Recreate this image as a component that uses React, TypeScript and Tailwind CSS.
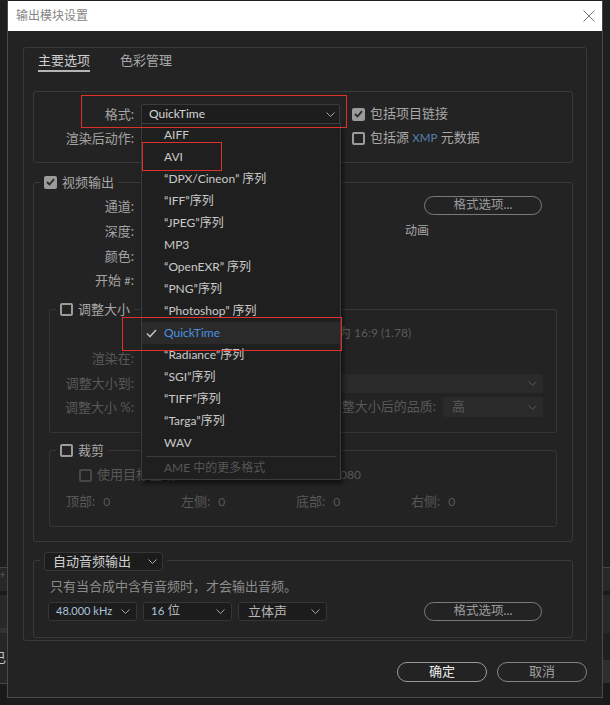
import React from "react";

const FONT = "font-['Lato','Noto_Sans_CJK_SC',sans-serif]";

function Chevron({ color = "#a8a8a8" }: { color?: string }) {
  return (
    <svg width="9" height="5" viewBox="0 0 9 5">
      <path d="M0.5 0.5 L4.5 4.5 L8.5 0.5" fill="none" stroke={color} strokeWidth="1" />
    </svg>
  );
}

function CheckBox({ checked, disabled }: { checked?: boolean; disabled?: boolean }) {
  if (checked) {
    return (
      <div className="w-[13px] h-[13px] rounded-[2px] bg-[#9b9b9b] flex items-center justify-center shrink-0">
        <svg width="9" height="8" viewBox="0 0 9 8">
          <path d="M1 4 L3.5 6.5 L8 1.2" fill="none" stroke="#2a2a2a" strokeWidth="1.8" />
        </svg>
      </div>
    );
  }
  return (
    <div
      className={
        disabled
          ? "w-[13px] h-[13px] rounded-[2px] border-2 border-[#474747] shrink-0"
          : "w-[13px] h-[13px] rounded-[2px] border-2 border-[#9b9b9b] shrink-0"
      }
    />
  );
}

function PillButton({ children, className }: { children: React.ReactNode; className: string }) {
  return (
    <div className={`flex items-center justify-center rounded-full ${className}`}>{children}</div>
  );
}

function LeftStrip() {
  return (
    <div className="w-[7px] h-[705px] flex flex-col shrink-0 overflow-hidden">
      <div className="h-[567px] bg-[#1f1f1f]" />
      <div className="h-px bg-[#454545]" />
      <div className="h-[23px] bg-[#282828] text-[9px] leading-[10px] text-[#666] pt-[2px]">+</div>
      <div className="h-[4px] bg-[#1a1a1a]" />
      <div className="h-[33px] bg-[#282828]" />
      <div className="h-[5px] bg-[#333333]" />
      <div className="h-[50px] bg-[#262626] flex items-center overflow-hidden">
        <span className="-ml-[7px] text-[13px] text-[#c8c8c8]">已</span>
      </div>
      <div className="h-px bg-[#454545]" />
      <div className="flex-1 bg-[#1a1a1a]" />
    </div>
  );
}

function RightStrip() {
  return (
    <div className="w-[7px] h-[705px] flex flex-col shrink-0">
      <div className="h-[567px] bg-[#1f1f1f]" />
      <div className="h-px bg-[#454545]" />
      <div className="h-[23px] bg-[#282828]" />
      <div className="h-[4px] bg-[#1a1a1a]" />
      <div className="h-[38px] bg-[#282828]" />
      <div className="h-[27px] bg-[#1f1f1f]" />
      <div className="h-[23px] bg-[#2e2e2e]" />
      <div className="flex-1 bg-[#1a1a1a]" />
    </div>
  );
}

const MENU_ITEMS = [
  "AIFF",
  "AVI",
  "“DPX/Cineon” 序列",
  "“IFF”序列",
  "“JPEG”序列",
  "MP3",
  "“OpenEXR” 序列",
  "“PNG”序列",
  "“Photoshop” 序列",
  "QuickTime",
  "“Radiance”序列",
  "“SGI”序列",
  "“TIFF”序列",
  "“Targa”序列",
  "WAV",
];

function Menu() {
  return (
    <div className="absolute left-[141px] top-[123px] w-[200px] border border-[#3c3c3c] bg-[#1f1f1f] shadow-[2px_3px_5px_rgba(0,0,0,0.6)] flex flex-col">
      {MENU_ITEMS.map((t, i) => (
        <div
          key={t}
          className={i === 9 ? "h-[22px] flex items-center bg-[#2a2a2a]" : "h-[22px] flex items-center"}
        >
          <div className="w-[22px] flex items-center pl-[4px]">
            {i === 9 && (
              <svg width="11" height="9" viewBox="0 0 11 9">
                <path d="M1 4.5 L4 7.5 L10 1" fill="none" stroke="#bdbdbd" strokeWidth="1.6" />
              </svg>
            )}
          </div>
          <span
            className={
              i === 9
                ? "text-[12px] leading-[16px] text-[#4a92e0]"
                : "text-[12px] leading-[16px] text-[#cacaca]"
            }
          >
            {t}
          </span>
        </div>
      ))}
      <div className="mt-[2px] mx-[4px] h-px bg-[#3a3a3a]" />
      <div className="h-[22px] flex items-center pl-[22px] text-[12px] text-[#565656]">AME 中的更多格式</div>
    </div>
  );
}

const LABEL = "w-[100px] text-right text-[13px] leading-[16px] text-[#a3a3a3] shrink-0";
const DIM_LABEL = "w-[84px] text-right text-[13px] leading-[16px] text-[#585858] shrink-0";

function Panel1() {
  return (
    <div className="mt-[19px] ml-[9px] w-[540px] h-[72px] border border-[#393939] rounded-[3px] flex flex-col pt-[12px] gap-[4px]">
      <div className="flex items-center h-[20px]">
        <span className={LABEL}>格式:</span>
        <div className="ml-[7px] w-[199px] h-[20px] bg-[#1d1d1d] border border-[#3a3a3a] rounded-[2px] flex items-center justify-between pl-[7px] pr-[4px]">
          <span className="text-[12px] text-[#d6d6d6]">QuickTime</span>
          <Chevron />
        </div>
        <div className="ml-[12px] flex items-center gap-[5px]">
          <CheckBox checked />
          <span className="text-[13px] text-[#a8a8a8]">包括项目链接</span>
        </div>
      </div>
      <div className="flex items-center h-[20px]">
        <span className={LABEL}>渲染后动作:</span>
        <div className="ml-[7px] w-[199px] h-[20px] bg-[#1d1d1d] border border-[#3a3a3a] rounded-[2px] flex items-center justify-end pr-[4px]">
          <Chevron />
        </div>
        <div className="ml-[12px] flex items-center gap-[5px]">
          <CheckBox />
          <span className="text-[13px] text-[#a8a8a8]">
            包括源 <span className="text-[11.5px] text-[#5580b0]">XMP</span> 元数据
          </span>
        </div>
      </div>
    </div>
  );
}

function Legend({ children }: { children: React.ReactNode }) {
  return (
    <div className="-mt-[9px] ml-[6px] self-start h-[16px] px-[4px] bg-[#232323] flex items-center gap-[5px]">
      {children}
    </div>
  );
}

function VideoGroup() {
  return (
    <div className="mt-[19px] ml-[9px] w-[540px] h-[360px] border border-[#393939] rounded-[3px] flex flex-col shrink-0">
      <Legend>
        <CheckBox checked />
        <span className="text-[13px] leading-[16px] text-[#a8a8a8]">视频输出</span>
      </Legend>
      <div className="mt-[3px] flex flex-col">
        <div className="h-[25px] flex items-center">
          <span className={LABEL}>通道:</span>
          <PillButton className="ml-auto mr-[30px] w-[118px] h-[19px] border-[1.5px] border-[#7a7a7a] text-[12.5px] text-[#9d9d9d]">
            格式选项...
          </PillButton>
        </div>
        <div className="h-[25px] flex items-center">
          <span className={LABEL}>深度:</span>
          <span className="ml-auto mr-[143px] text-[12px] text-[#a8a8a8]">动画</span>
        </div>
        <div className="h-[25px] flex items-center">
          <span className={LABEL}>颜色:</span>
        </div>
        <div className="h-[25px] flex items-center">
          <span className={LABEL}>
            开始 <span className="text-[11px]">#</span>:
          </span>
        </div>
      </div>

      <div className="mt-[16px] ml-[15px] w-[508px] h-[124px] border border-[#363636] rounded-[3px] flex flex-col shrink-0">
        <Legend>
          <CheckBox />
          <span className="text-[13px] leading-[16px] text-[#a8a8a8]">调整大小</span>
        </Legend>
        <div className="mt-[4px] h-[24px] flex items-center pl-[223px] text-[13px] text-[#5a5a5a]">
          锁定长宽比为 <span className="ml-[3px] text-[12px]">16:9 (1.78)</span>
        </div>
        <div className="h-[26px] flex items-center">
          <span className={DIM_LABEL}>渲染在:</span>
        </div>
        <div className="h-[24px] flex items-center">
          <span className={DIM_LABEL}>调整大小到:</span>
          <div className="ml-[7px] w-[402px] h-[19px] bg-[#2a2a2a] rounded-[2px] flex items-center justify-end pr-[6px]">
            <Chevron color="#555555" />
          </div>
        </div>
        <div className="h-[24px] flex items-center pr-[13px]">
          <span className={DIM_LABEL}>调整大小 %:</span>
          <span className="ml-auto text-[13px] text-[#585858]">调整大小后的品质:</span>
          <div className="ml-[7px] w-[100px] h-[20px] bg-[#2a2a2a] rounded-[2px] flex items-center justify-between pl-[9px] pr-[6px]">
            <span className="text-[13px] text-[#5a5a5a]">高</span>
            <Chevron color="#555555" />
          </div>
        </div>
      </div>

      <div className="mt-[17px] ml-[15px] w-[508px] h-[77px] border border-[#363636] rounded-[3px] flex flex-col shrink-0">
        <Legend>
          <CheckBox />
          <span className="text-[13px] leading-[16px] text-[#a8a8a8]">裁剪</span>
        </Legend>
        <div className="mt-[6px] h-[22px] w-[311px] flex items-center pl-[29px]">
          <CheckBox disabled />
          <span className="ml-[5px] text-[13px] text-[#585858]">使用目标区域</span>
          <span className="ml-auto text-[12px] text-[#585858]">1080</span>
        </div>
        <div className="mt-[5px] h-[22px] flex items-center pl-[16px] text-[13px] text-[#585858]">
          {["顶部:", "左侧:", "底部:", "右侧:"].map((l) => (
            <div key={l} className="w-[115px] flex items-center">
              <span>{l}</span>
              <span className="ml-[8px] text-[12px]">0</span>
            </div>
          ))}
        </div>
      </div>
    </div>
  );
}

function AudioSelect({ w, children }: { w: string; children: React.ReactNode }) {
  return (
    <div
      className={`${w} h-[19px] bg-[#1c1c1c] border border-[#363636] rounded-[3px] flex items-center justify-between pl-[7px] pr-[6px]`}
    >
      {children}
      <Chevron />
    </div>
  );
}

function AudioGroup() {
  return (
    <div className="mt-[18px] ml-[9px] w-[540px] h-[78px] border border-[#393939] rounded-[3px] flex flex-col shrink-0">
      <div className="-mt-[9px] ml-[6px] self-start px-[4px] bg-[#232323]">
        <div className="w-[119px] h-[19px] bg-[#1c1c1c] border border-[#363636] rounded-[3px] flex items-center justify-between pl-[8px] pr-[5px]">
          <span className="text-[13px] text-[#d0d0d0]">自动音频输出</span>
          <Chevron />
        </div>
      </div>
      <div className="mt-[7px] pl-[16px] text-[13px] leading-[16px] text-[#8c8c8c]">
        只有当合成中含有音频时，才会输出音频。
      </div>
      <div className="mt-[8px] h-[19px] pl-[14px] flex items-center gap-[6px]">
        <AudioSelect w="w-[89px]">
          <span className="text-[11px] text-[#a9c2de]">48.000 kHz</span>
        </AudioSelect>
        <AudioSelect w="w-[89px]">
          <span className="text-[12.5px] text-[#b8b8b8]">
            <span className="text-[11.5px] text-[#a9c2de]">16</span> 位
          </span>
        </AudioSelect>
        <AudioSelect w="w-[89px]">
          <span className="pl-[2px] text-[13px] text-[#b8b8b8]">立体声</span>
        </AudioSelect>
        <PillButton className="ml-auto mr-[30px] w-[118px] h-[19px] border-[1.5px] border-[#7a7a7a] text-[12.5px] text-[#9d9d9d]">
          格式选项...
        </PillButton>
      </div>
    </div>
  );
}

export default function App() {
  return (
    <div className={`relative flex w-[610px] h-[705px] overflow-hidden bg-[#1c1c1c] ${FONT}`}>
      <LeftStrip />
      <div className="flex flex-col w-[596px] h-[698px] shrink-0 border-x border-b border-[#4a4a4a] border-t border-t-[#1f1f1f] bg-[#232323]">
        <div className="flex items-center justify-between h-[30px] bg-white pl-[8px] pr-[7px]">
          <span className="text-[12px] text-[#858585]">输出模块设置</span>
          <svg width="12" height="12" viewBox="0 0 12 12">
            <path d="M0.5 0.5 L11.5 11.5 M11.5 0.5 L0.5 11.5" stroke="#7a7a7a" strokeWidth="1" />
          </svg>
        </div>
        <div className="flex flex-col pl-[15px] pt-[16px]">
          <div className="flex flex-col w-[564px] h-[594px] border border-[#393939] rounded-[3px]">
            <div className="flex mt-[4px] pl-[14px] gap-[30px]">
              <span className="text-[13px] leading-[16px] text-[#d0d0d0] border-b-2 border-[#b5b5b5] pb-[2px]">
                主要选项
              </span>
              <span className="text-[13px] leading-[16px] text-[#a8a8a8]">色彩管理</span>
            </div>
            <Panel1 />
            <VideoGroup />
            <AudioGroup />
          </div>
          <div className="mt-[21px] w-[564px] flex justify-end gap-[10px]">
            <PillButton className="w-[90px] h-[20px] border-[1.5px] border-[#9a9a9a] text-[13px] text-[#ededed]">
              确定
            </PillButton>
            <PillButton className="w-[90px] h-[20px] border-[1.5px] border-[#858585] text-[13px] text-[#a0a0a0]">
              取消
            </PillButton>
          </div>
        </div>
      </div>
      <RightStrip />

      <Menu />

      <div className="absolute left-[81px] top-[95px] w-[266px] h-[33px] border border-[#e0302a]" />
      <div className="absolute left-[142px] top-[142px] w-[80px] h-[29px] border border-[#e0302a]" />
      <div className="absolute left-[122px] top-[317px] w-[220px] h-[34px] border border-[#e0302a]" />
    </div>
  );
}
